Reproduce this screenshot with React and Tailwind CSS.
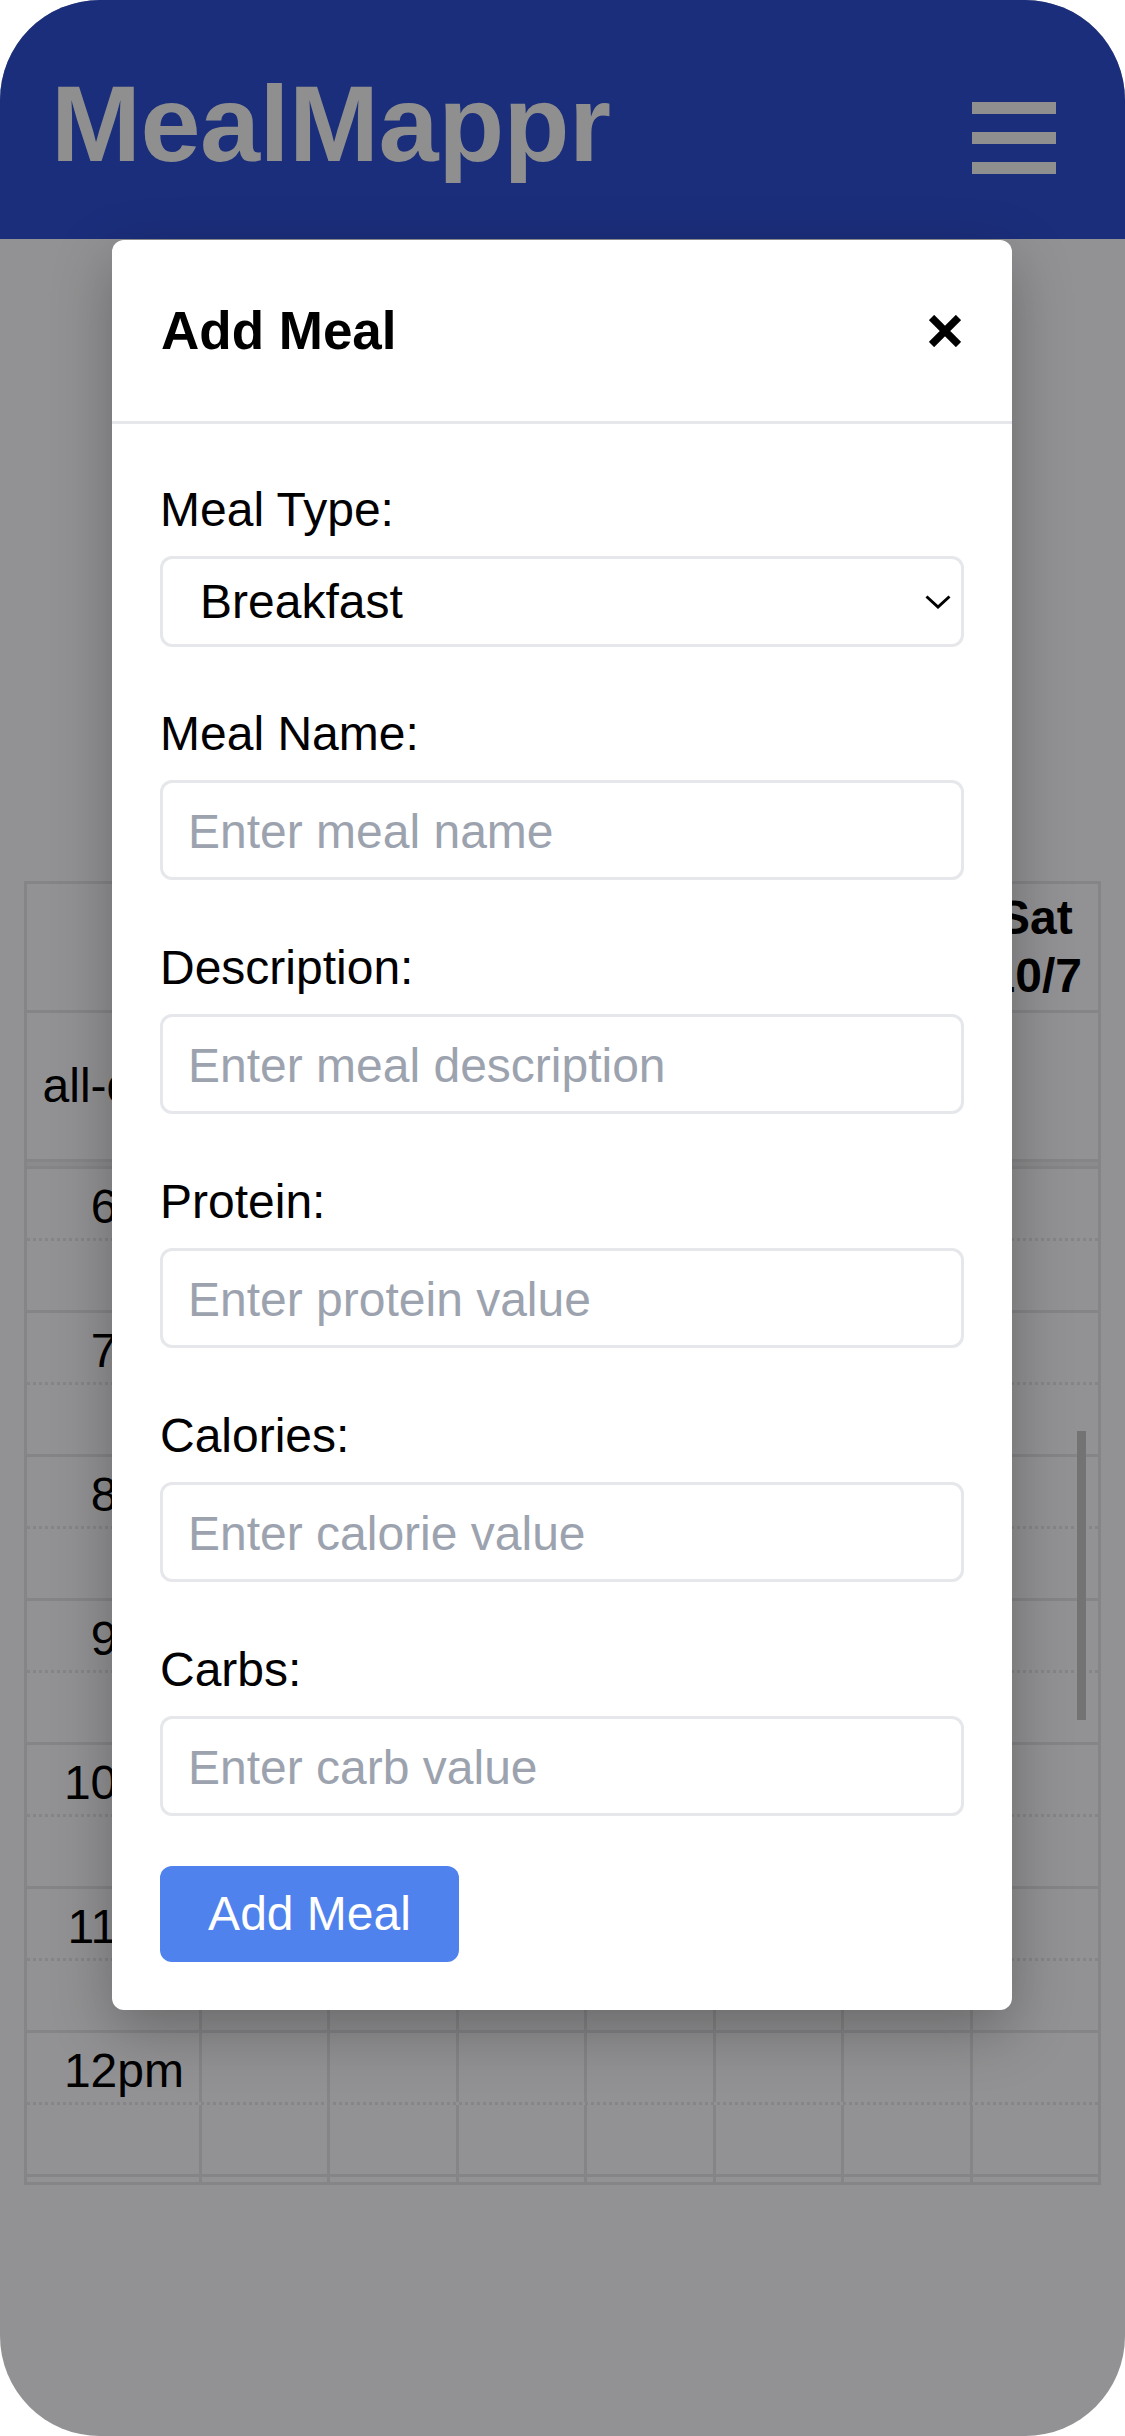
import { useState } from 'react';

const days = [
  ['Sun', '10/1'],
  ['Mon', '10/2'],
  ['Tue', '10/3'],
  ['Wed', '10/4'],
  ['Thu', '10/5'],
  ['Fri', '10/6'],
  ['Sat', '10/7'],
];

const hours = ['6am', '7am', '8am', '9am', '10am', '11am', '12pm'];

const fields = [
  { name: 'name', label: 'Meal Name:', placeholder: 'Enter meal name' },
  { name: 'description', label: 'Description:', placeholder: 'Enter meal description' },
  { name: 'protein', label: 'Protein:', placeholder: 'Enter protein value' },
  { name: 'calories', label: 'Calories:', placeholder: 'Enter calorie value' },
  { name: 'carbs', label: 'Carbs:', placeholder: 'Enter carb value' },
];

const rowGrid = 'grid grid-cols-[172px_repeat(7,minmax(0,1fr))]';

function DayCells() {
  return days.map(([d]) => (
    <div key={d} className="border-l-[3px] border-[#858587]" />
  ));
}

function Calendar() {
  return (
    <div className="relative ml-[24px] w-[1077px] border-[3px] border-[#858587] text-black">
      {/* day headers */}
      <div className={`${rowGrid} h-[129px] border-b-[3px] border-[#858587]`}>
        <div />
        {days.map(([d, date]) => (
          <div key={d} className="border-l-[3px] border-[#858587] flex flex-col items-center justify-center font-bold text-[48px] leading-[58px]">
            <span>{d}</span>
            <span>{date}</span>
          </div>
        ))}
      </div>

      {/* all-day row */}
      <div className={`${rowGrid} h-[146px]`}>
        <div className="flex items-center justify-end pr-[15px] text-[48px]">all-day</div>
        <DayCells />
      </div>
      <div className="h-[10px] border-y-[3px] border-[#858587] bg-[#8b8b8d]" />

      {/* time slots */}
      {hours.map(h => (
        <div key={h} className="border-b-[3px] border-[#858587]">
          <div className={`${rowGrid} h-[72px] border-b-[3px] border-dotted border-[#858587]`}>
            <div className="text-right pr-[15px] pt-[14px] text-[48px] leading-[48px]">{h}</div>
            <DayCells />
          </div>
          <div className={`${rowGrid} h-[69px]`}>
            <div />
            <DayCells />
          </div>
        </div>
      ))}
      <div className={`${rowGrid} h-[5px]`}>
        <div />
        <DayCells />
      </div>

      {/* scrollbar */}
      <div className="absolute left-[1050px] top-[547px] w-[9px] h-[289px] bg-[#737374]" />
    </div>
  );
}

function AddMealModal() {
  const [form, setForm] = useState({ type: 'Breakfast' });

  const update = (key, value) => setForm(prev => ({ ...prev, [key]: value }));

  return (
    <div className="absolute left-[112px] top-[240px] w-[900px] bg-white rounded-[12px] shadow-[0_20px_60px_rgba(0,0,0,0.28)]">
      <div className="h-[184px] flex items-center justify-between pl-[49px] pr-[51px] border-b-[3px] border-[#e5e7eb]">
        <h2 className="text-[53px] font-bold text-black">Add Meal</h2>
        <button type="button" aria-label="Close">
          <svg width="32" height="32" viewBox="0 0 32 32">
            <path d="M2.5 2.5 L29.5 29.5 M29.5 2.5 L2.5 29.5" stroke="#000" strokeWidth="7.5" fill="none" />
          </svg>
        </button>
      </div>

      <form className="px-[48px] pt-[50px] pb-[48px] text-black" onSubmit={e => e.preventDefault()}>
        <label className="block text-[48px] leading-[72px] mb-[10px]">Meal Type:</label>
        <div className="relative mb-[51px]">
          <select
            value={form.type}
            onChange={e => update('type', e.target.value)}
            className="appearance-none w-full h-[91px] border-[3px] border-[#e5e7eb] rounded-[12px] pl-[37px] text-[48px] bg-white text-black outline-none"
          >
            <option>Breakfast</option>
            <option>Lunch</option>
            <option>Dinner</option>
            <option>Snack</option>
          </select>
          <svg className="pointer-events-none absolute right-[13px] top-[39px]" width="26" height="14" viewBox="0 0 26 14">
            <path d="M1.5 1.5 L13 12 L24.5 1.5" fill="none" stroke="#000" strokeWidth="3" />
          </svg>
        </div>

        {fields.map((f, i) => (
          <div key={f.name} className={i < fields.length - 1 ? 'mb-[52px]' : ''}>
            <label className="block text-[48px] leading-[72px] mb-[10px]">{f.label}</label>
            <input
              type="text"
              value={form[f.name] || ''}
              onChange={e => update(f.name, e.target.value)}
              placeholder={f.placeholder}
              className="w-full h-[100px] border-[3px] border-[#e5e7eb] rounded-[12px] pl-[25px] pt-[3px] text-[48px] placeholder:text-[#9ca3af] outline-none"
            />
          </div>
        ))}

        <button type="submit" className="mt-[50px] w-[299px] h-[96px] rounded-[12px] bg-[#5082ed] text-white text-[48px]">
          Add Meal
        </button>
      </form>
    </div>
  );
}

export default function App() {
  return (
    <div className="w-[1125px] h-[2436px] bg-white font-['Liberation_Sans',Arial,sans-serif]">
      <div className="relative h-full rounded-[100px] overflow-hidden bg-[#929294]">
        <header className="h-[239px] bg-[#1b2e7b] flex items-start justify-between pl-[51px] pr-[69px]">
          <h1 className="mt-[70px] text-[108px] leading-[108px] font-bold tracking-[-0.5px] text-[#8f8f8f]">MealMappr</h1>
          <div className="mt-[102px] flex flex-col gap-[18px]">
            <span className="block w-[84px] h-[12px] bg-[#8f8f8f]" />
            <span className="block w-[84px] h-[12px] bg-[#8f8f8f]" />
            <span className="block w-[84px] h-[12px] bg-[#8f8f8f]" />
          </div>
        </header>

        <main className="pt-[642px]">
          <Calendar />
        </main>

        <AddMealModal />
      </div>
    </div>
  );
}
